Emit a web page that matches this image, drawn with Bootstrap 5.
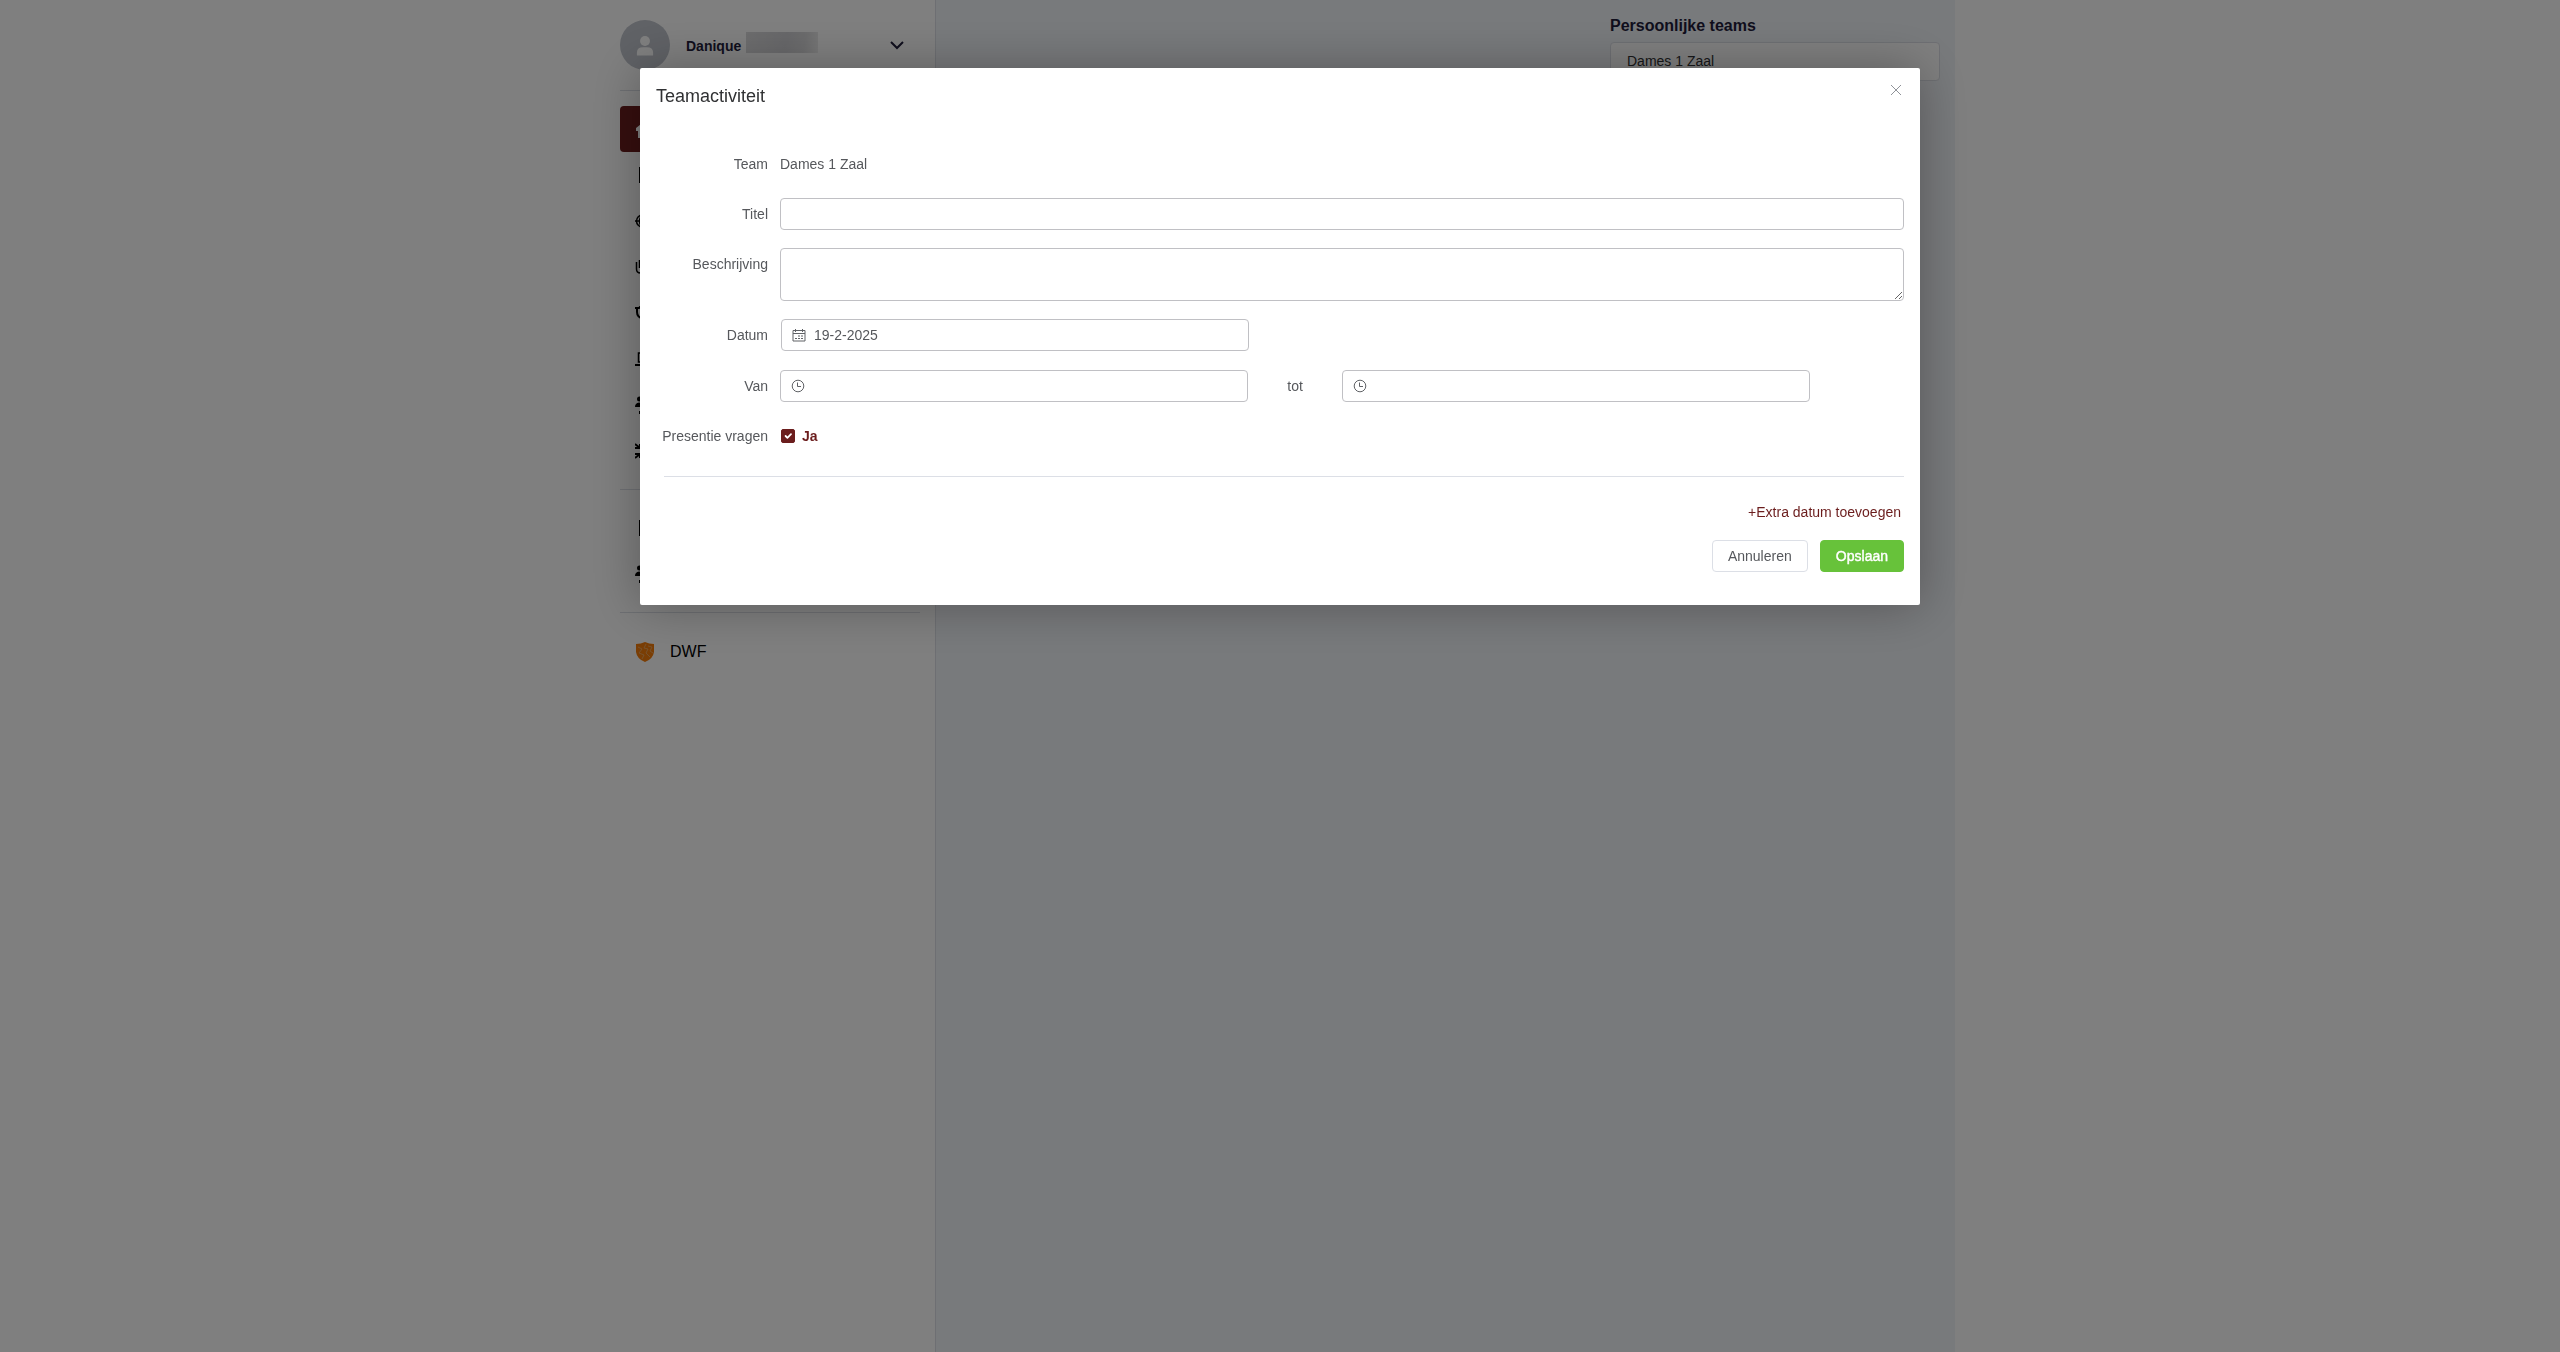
<!DOCTYPE html>
<html lang="nl">
<head>
<meta charset="utf-8">
<meta name="viewport" content="width=device-width, initial-scale=1">
<title>Teamactiviteit</title>
<link href="https://cdn.jsdelivr.net/npm/bootstrap@5.3.0/dist/css/bootstrap.min.css" rel="stylesheet">
<style>
body{font-family:"Liberation Sans",Arial,sans-serif;font-size:14px;line-height:20px;color:#56585c;background:#fff}
.site-shell{max-width:1350px}
.side-col{flex:0 0 330px;padding:0 15px}
.main-col{background:#f1f4f9;border-left:1px solid #dcdfe6;min-width:0}
.profile-row{height:90px;padding:20px 0;border:0;background:none;color:#1f1c3a}
.avatar-disc{width:50px;height:50px;background:#c0c4cc}
.profile-name{padding:2px 0 0 16px;font-size:14px}
.name-veil{width:72px;height:21px;margin:-5px 0 0 5px;background:linear-gradient(100deg,#dadadc,#cfcfd3 55%,#d8d8da 80%,#eee)}
.side-group{border-top:1px solid #dcdfe6;padding:15px 0}
.side-item{height:46px;padding:0 15px;gap:15px;font-size:16px;color:#000;text-decoration:none;border-radius:4px}
.side-item.current{background:#6b1d1d;color:#fff}
.side-item svg{width:20px;height:20px;flex:none}
.side-item.club{height:48px}
.teams-col{width:360px;padding:16px 15px}
.teams-col h2{font-size:16px;line-height:20px;margin:0 0 6px;color:#1f1c3a}
.team-tile{height:39px;padding:0 16px 2px;border:1px solid #dcdfe6;border-radius:4px;background:#fff;color:#303133;text-decoration:none}
.modal-backdrop{--bs-backdrop-opacity:.5}
.activity-dialog{max-width:50%;margin:5vh auto}
.activity-dialog .modal-content{border:0;border-radius:2px;box-shadow:0 1px 50px rgba(0,0,0,.3);color:#56585c}
.activity-dialog .modal-header{padding:14px 16px 10px;border:0;align-items:flex-start}
.activity-dialog .modal-title{padding-top:2px;font-size:18px;line-height:24px;font-weight:400;color:#303133}
.close-x{width:16px;height:16px;color:#909399}
.activity-dialog .modal-body{padding:30px 16px 0 24px}
.form-line{margin-bottom:18px}
.line-label{flex:0 0 116px;min-width:0;padding-right:12px;text-align:right;line-height:32px;white-space:nowrap}
.line-label.wide{display:flex;justify-content:flex-end}
.field-box{height:32px;padding:0 12px;font-size:14px;line-height:30px;border:1px solid #c0c0c4;border-radius:4px;color:#56585c}
.field-area{height:53px;padding:5px 12px}
.icon-field svg{position:absolute;left:11px;top:9px;width:14px;height:14px;pointer-events:none}
.icon-field .field-box{padding-left:32px}
.date-line{min-height:33px}
.date-line .line-body{padding-left:1px}
.line-body{min-width:0}
.span-ten{flex:0 0 41.6667%}
.span-two{flex:0 0 8.3333%}
.form-check-input.tick{width:14px;height:14px;margin:0 7px 0 1px;border-radius:2px;border-color:#6b1d1d}
.form-check-input.tick:checked{background-color:#6b1d1d}
.wine{color:#6b1d1d}
.form-rule{border-top:1px solid #dcdfe6;margin-top:24px}
.activity-dialog .modal-footer{padding:25px 16px 33px;border:0;gap:18px}
.link-btn{border:0;background:none;padding:0 3px;line-height:20px;font-size:14px}
.button-pair{gap:12px}
.btn-flat{height:32px;font-size:14px;line-height:20px;padding:0 15px;border-radius:4px}
.btn-cancel{--bs-btn-color:#56585c;--bs-btn-border-color:#dcdfe6;--bs-btn-bg:#fff;min-width:96px}
.btn-save{--bs-btn-color:#fff;--bs-btn-border-color:#67c23a;--bs-btn-bg:#67c23a;min-width:84px;-webkit-text-stroke:.4px #fff}
</style>
<script src="https://cdn.jsdelivr.net/npm/bootstrap@5.3.0/dist/js/bootstrap.bundle.min.js"></script>
</head>
<body class="overflow-hidden">
<svg class="d-none" xmlns="http://www.w3.org/2000/svg">
  <symbol id="i-home" viewBox="0 0 20 20"><path fill="currentColor" d="M10 2 1 9v3h2v7h5v-5h4v5h5v-7h2V9z"/></symbol>
  <symbol id="i-doc" viewBox="0 0 20 20"><path fill="none" stroke="currentColor" stroke-width="2" d="M5 3h11v14H5z"/></symbol>
  <symbol id="i-globe" viewBox="0 0 20 20"><g fill="none" stroke="currentColor" stroke-width="1.500"><circle cx="7.500" cy="10" r="6"/><path d="M0 10h16M7.500 4c-4 3-4 9 0 12M7.500 4c4 3 4 9 0 12"/></g></symbol>
  <symbol id="i-hand" viewBox="0 0 20 20"><path fill="none" stroke="currentColor" stroke-width="1.500" d="M1.500 5v7q0 4 4 4h7q4 0 4-4V5M4.500 3v8"/></symbol>
  <symbol id="i-cup" viewBox="0 0 20 20"><path fill="none" stroke="currentColor" stroke-width="2" d="M0 5h4l1-1h10M2 5v4q0 5 6 7"/></symbol>
  <symbol id="i-desk" viewBox="0 0 20 20"><path fill="none" stroke="currentColor" stroke-width="1.500" d="M3.500 13V4h12v9z"/><path fill="currentColor" d="M0 15h19v2H0z"/></symbol>
  <symbol id="i-people" viewBox="0 0 20 20"><g fill="currentColor"><circle cx="4.500" cy="4" r="2.500"/><path d="M0 12q0-4 4-4.500 3 0 4 2v2.500zM4 16h12v3H4z"/><circle cx="12" cy="7" r="3"/></g></symbol>
  <symbol id="i-shrink" viewBox="0 0 20 20"><path fill="none" stroke="currentColor" stroke-width="2" d="M0 3l5 4M5 3v4H0M0 17l5-4M5 17v-4H0M18 3l-5 4M18 17l-5-4"/></symbol>
  <symbol id="i-clock" viewBox="0 0 14 14"><g fill="none" stroke="#606266"><circle cx="7" cy="7" r="5.800"/><path d="M6.500 3.500v4H10"/></g></symbol>
</svg>

<div class="site-shell container-fluid p-0 d-flex min-vh-100">
  <aside class="side-col">
    <button type="button" class="profile-row d-flex align-items-center w-100">
      <span class="avatar-disc rounded-circle d-flex align-items-center justify-content-center">
        <svg width="18" height="21" viewBox="0 0 20 22" fill="#fff"><circle cx="10" cy="6" r="5.500"/><path d="M1 22v-3q0-6 7-6h4q7 0 7 6v3z"/></svg>
      </span>
      <b class="profile-name">Danique</b><span class="name-veil"></span>
      <svg class="ms-auto me-3" width="14" height="10" viewBox="0 0 14 10" fill="none" stroke="currentColor" stroke-width="2"><path d="M1 2l6 6 6-6"/></svg>
    </button>
    <nav class="side-group" aria-label="Hoofdmenu">
      <a href="#" class="side-item current d-flex align-items-center" aria-label="Home"><svg><use href="#i-home"/></svg></a>
      <a href="#" class="side-item d-flex align-items-center" aria-label="Nieuws"><svg><use href="#i-doc"/></svg></a>
      <a href="#" class="side-item d-flex align-items-center" aria-label="Wedstrijden"><svg><use href="#i-globe"/></svg></a>
      <a href="#" class="side-item d-flex align-items-center" aria-label="Vrijwilligers"><svg><use href="#i-hand"/></svg></a>
      <a href="#" class="side-item d-flex align-items-center" aria-label="Competitie"><svg><use href="#i-cup"/></svg></a>
      <a href="#" class="side-item d-flex align-items-center" aria-label="Training"><svg><use href="#i-desk"/></svg></a>
      <a href="#" class="side-item d-flex align-items-center" aria-label="Teams"><svg><use href="#i-people"/></svg></a>
      <a href="#" class="side-item d-flex align-items-center" aria-label="Uitwisseling"><svg><use href="#i-shrink"/></svg></a>
    </nav>
    <nav class="side-group" aria-label="Beheer">
      <a href="#" class="side-item d-flex align-items-center" aria-label="Documenten"><svg><use href="#i-doc"/></svg></a>
      <a href="#" class="side-item d-flex align-items-center" aria-label="Leden"><svg><use href="#i-people"/></svg></a>
    </nav>
    <nav class="side-group" aria-label="Club">
      <a href="#" class="side-item club d-flex align-items-center"><svg viewBox="0 0 20 20"><path fill="#f57c0a" d="M1 2q5 0 9-2 4 2 9 2v8q-1 7-9 10-8-3-9-10z"/><path fill="none" stroke="#e8b070" stroke-width=".8" d="M3 5l4 2-3 4 5 2-2 4M11 2l-2 4 4 1-2 4 4 4M13 4l4 1-2 4 3 2"/></svg>DWF</a>
    </nav>
  </aside>
  <main class="main-col flex-grow-1 d-flex justify-content-end">
    <section class="teams-col">
      <h2 class="fw-bold">Persoonlijke teams</h2>
      <a href="#" class="team-tile d-flex align-items-center">Dames 1 Zaal</a>
    </section>
  </main>
</div>

<div class="modal-backdrop show"></div>
<div class="modal show d-block" tabindex="-1" role="dialog" aria-labelledby="dialogTitle">
  <form class="modal-dialog activity-dialog">
    <div class="modal-content">
      <div class="modal-header">
        <h1 class="modal-title" id="dialogTitle">Teamactiviteit</h1>
        <button type="button" class="close-x btn p-0 border-0 d-flex align-items-center justify-content-center" aria-label="Sluiten"><svg width="10" height="10" viewBox="0 0 10 10" stroke="currentColor"><path d="M0 0l10 10M10 0L0 10"/></svg></button>
      </div>
      <div class="modal-body">
        <div class="form-line d-flex"><span class="line-label">Team</span><span class="line-body d-flex align-items-center">Dames 1 Zaal</span></div>
        <div class="form-line d-flex"><label class="line-label" for="titel">Titel</label><div class="line-body flex-grow-1"><input id="titel" type="text" class="form-control field-box"></div></div>
        <div class="form-line d-flex"><label class="line-label" for="beschrijving">Beschrijving</label><div class="line-body flex-grow-1"><textarea id="beschrijving" class="form-control field-box field-area"></textarea></div></div>
        <div class="form-line date-line d-flex"><label class="line-label" for="datum">Datum</label>
          <div class="line-body flex-grow-1 d-flex"><div class="icon-field span-ten position-relative"><input id="datum" type="text" class="form-control field-box" value="19-2-2025">
            <svg viewBox="0 0 14 14" fill="none" stroke="#606266"><path d="M1 2.500h12v10.500H1zM1 5.500h12M3.500 1v3M10.500 1v3"/><path stroke-dasharray="2 1" d="M6 8h5M3 10.500h8"/></svg></div></div></div>
        <div class="form-line d-flex"><label class="line-label" for="van">Van</label>
          <div class="line-body flex-grow-1 d-flex align-items-center">
            <div class="icon-field span-ten position-relative"><input id="van" type="text" class="form-control field-box"><svg><use href="#i-clock"/></svg></div>
            <label class="span-two text-center" for="tot">tot</label>
            <div class="icon-field span-ten position-relative"><input id="tot" type="text" class="form-control field-box"><svg><use href="#i-clock"/></svg></div>
          </div></div>
        <div class="d-flex"><span class="line-label wide">Presentie vragen</span><div class="line-body d-flex align-items-center"><input id="presentie" type="checkbox" class="form-check-input tick" checked><label class="wine fw-bold" for="presentie">Ja</label></div></div>
        <div class="form-rule"></div>
      </div>
      <div class="modal-footer d-flex flex-column align-items-end">
        <button type="button" class="link-btn wine m-0">+Extra datum toevoegen</button>
        <div class="button-pair d-flex m-0">
          <button type="button" class="btn btn-flat btn-cancel">Annuleren</button>
          <button type="submit" class="btn btn-flat btn-save">Opslaan</button>
        </div>
      </div>
    </div>
  </form>
</div>
</body>
</html>
